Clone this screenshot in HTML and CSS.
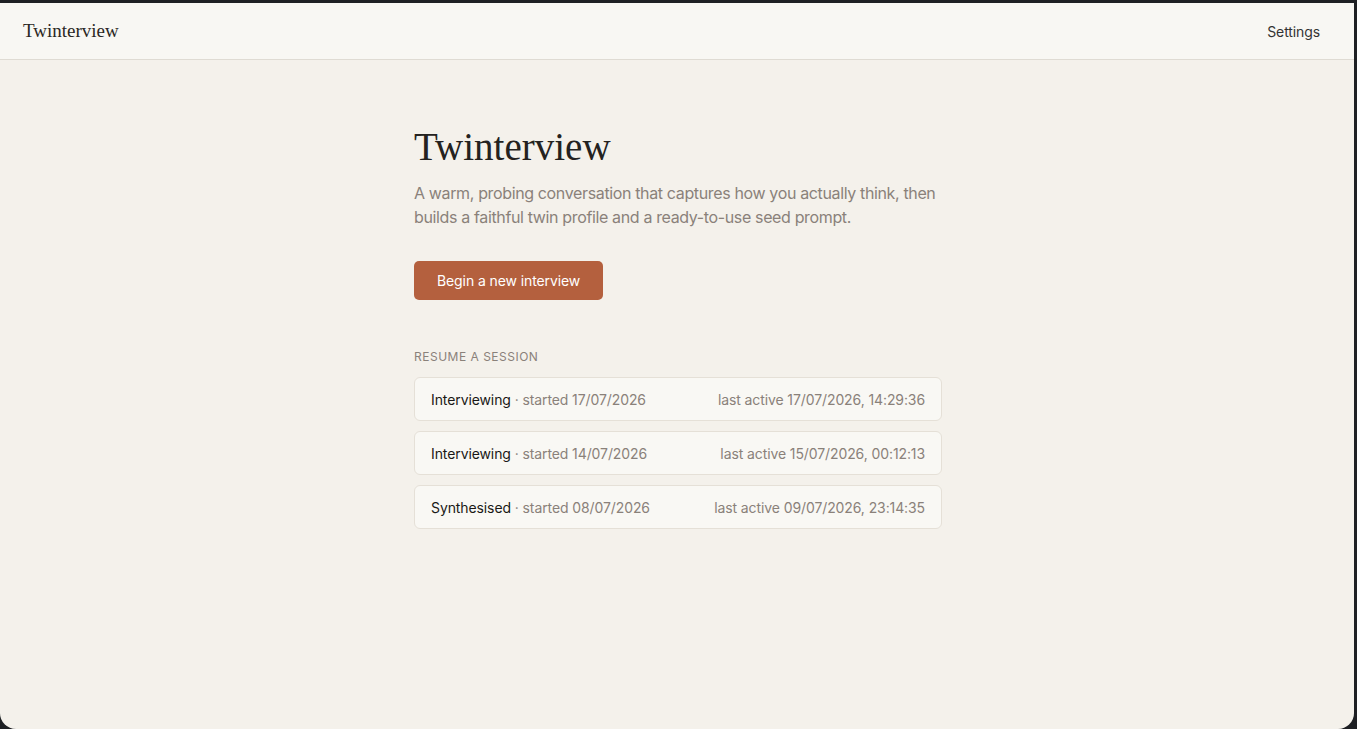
FILE: index.html
```html
<!DOCTYPE html>
<html lang="en">
<head>
    <meta charset="UTF-8">
    <meta name="viewport" content="width=device-width, initial-scale=1.0">
    <title>Twinterview</title>
    <link rel="stylesheet" href="styles.css">
</head>
<body>
    <div class="window">
        <header class="topbar">
            <a class="brand" href="#">Twinterview</a>
            <a class="nav-link" href="#">Settings</a>
        </header>
        <main class="container">
            <h1>Twinterview</h1>
            <p class="lead">A warm, probing conversation that captures how you actually think, then builds a faithful twin profile and a ready-to-use seed prompt.</p>
            <button class="primary" type="button">Begin a new interview</button>

            <h2 class="section-label">Resume a session</h2>
            <ul class="sessions">
                <li class="session">
                    <span><strong>Interviewing</strong> · started 17/07/2026</span>
                    <span>last active 17/07/2026, 14:29:36</span>
                </li>
                <li class="session">
                    <span><strong>Interviewing</strong> · started 14/07/2026</span>
                    <span>last active 15/07/2026, 00:12:13</span>
                </li>
                <li class="session">
                    <span><strong>Synthesised</strong> · started 08/07/2026</span>
                    <span>last active 09/07/2026, 23:14:35</span>
                </li>
            </ul>
        </main>
    </div>
</body>
</html>
```

FILE: styles.css
```css
html, body {
    margin: 0;
    height: 100%;
}
body {
    background: #1e2024;
    font-family: Inter, "Noto Sans", sans-serif;
    color: #2a2724;
    overflow: hidden;
}
.window {
    margin: 3px 3px 0 0;
    height: 726px;
    background: #f4f1eb;
    border-radius: 0 0 16px 16px;
    overflow: hidden;
}
.topbar {
    height: 56px;
    display: flex;
    align-items: center;
    justify-content: space-between;
    padding: 0 34px 0 23px;
    background: #f8f7f3;
    border-bottom: 1px solid #dfdbd3;
}
.brand {
    font-family: "Liberation Serif", "DejaVu Serif", serif;
    font-size: 19px;
    color: #2a2724;
    text-decoration: none;
}
.nav-link {
    font-size: 14px;
    letter-spacing: -0.1px;
    color: #333;
    text-decoration: none;
}
.container {
    width: 528px;
    margin: 0 auto;
    padding-top: 64px;
    position: relative;
    left: 1px;
}
h1 {
    font-family: "Liberation Serif", "DejaVu Serif", serif;
    font-weight: 400;
    font-size: 39px;
    line-height: 46px;
    margin: 0 0 11px;
    color: #242220;
}
.lead {
    font-size: 16px;
    line-height: 24px;
    letter-spacing: -0.36px;
    color: #8a817a;
    margin: 0 0 32px;
}
.primary {
    height: 39px;
    padding: 0 23px;
    background: #b4603e;
    color: #fff;
    border: none;
    border-radius: 5px;
    font-family: inherit;
    font-size: 14px;
    letter-spacing: -0.1px;
    cursor: pointer;
}
.primary:hover {
    background: #a1532f;
}
.section-label {
    margin: 49px 0 13px;
    font-size: 12px;
    font-weight: 400;
    letter-spacing: 0.5px;
    text-transform: uppercase;
    color: #8a817a;
}
.sessions {
    list-style: none;
    margin: 0;
    padding: 0;
    display: flex;
    flex-direction: column;
    gap: 10px;
}
.session {
    height: 42px;
    display: flex;
    align-items: center;
    justify-content: space-between;
    padding: 0 16px;
    background: #f9f8f4;
    border: 1px solid #e5e0d7;
    border-radius: 6px;
    font-size: 14px;
    letter-spacing: -0.1px;
    color: #8a817a;
}
.session strong {
    font-weight: 400;
    color: #1a1816;
}
```
